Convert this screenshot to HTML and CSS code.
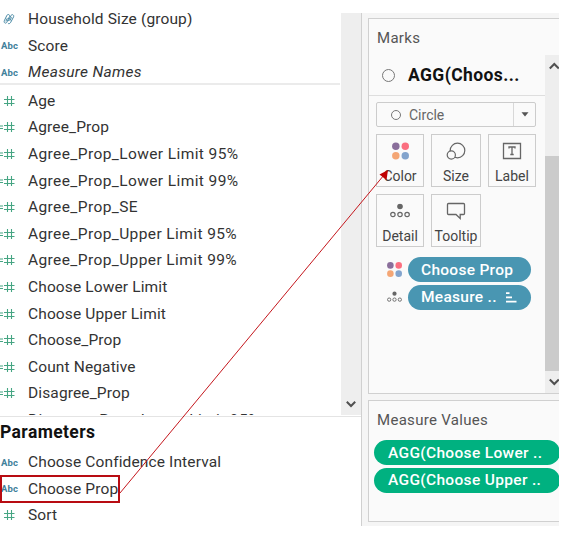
FILE: index.html
```
<!DOCTYPE html>
<html lang="en">
<head>
<meta charset="utf-8">
<title>Worksheet</title>
<link rel="stylesheet" href="styles.css">
</head>
<body>
<svg class="defs" width="0" height="0">
  <symbol id="hash" viewBox="0 0 12 12"><path d="M4.500 1v10M8.500 1v10M1 4.500h10.500M1 8.500h10.500" stroke="#46a583" stroke-width="1.1" fill="none"/></symbol>
  <symbol id="calc" viewBox="0 0 15 12"><path d="M7.500 1v10M11.500 1v10M4 4.500h10.500M4 8.500h10.500M0 5h3M0 7.500h3" stroke="#46a583" stroke-width="1.1" fill="none"/></symbol>
  <symbol id="clip" viewBox="0 0 12 12"><path d="M1.3 7.8 3.8 2.5C4.7.7 7.3 1.6 6.5 3.5L3.8 9.3C3 11 .5 10 1.3 7.8M4.3 5.2 2.8 8.3M5.2 10.6c1.2.3 2-.3 2.5-1.3L10.5 4c.9-1.9-1.2-3.2-2.4-1.6L5.4 8.1M8.5 4.3 6.8 7.8" stroke="#4b8ba6" stroke-width="1" fill="none"/></symbol>
  <symbol id="dots" viewBox="0 0 16 16"><circle cx="3.6" cy="3.6" r="3.5" fill="#8a6f9b"/><circle cx="12.5" cy="3.6" r="3.5" fill="#fb6f80"/><circle cx="3.6" cy="12.4" r="3.5" fill="#f4a675"/><circle cx="12.5" cy="12.4" r="3.5" fill="#83a4cd"/></symbol>
  <symbol id="detail" viewBox="0 0 20 15"><circle cx="10" cy="3" r="2.8" fill="#666"/><g fill="none" stroke="#666" stroke-width="1.2"><circle cx="2.9" cy="11" r="2.2"/><circle cx="10" cy="11" r="2.2"/><circle cx="17.1" cy="11" r="2.2"/></g></symbol>
</svg>
<main class="workspace">
  <section class="data-pane">
    <div class="fields">
      <div class="field-list">
        <ul class="rows dimensions">
          <li><svg class="icon-clip"><use href="#clip"/></svg><span>Household Size (group)</span></li>
          <li><b class="abc">Abc</b><span>Score</span></li>
          <li><b class="abc">Abc</b><span class="generated">Measure Names</span></li>
        </ul>
        <ul class="rows measures">
          <li><svg class="icon-hash"><use href="#hash"/></svg><span>Age</span></li>
          <li><svg class="icon-calc"><use href="#calc"/></svg><span>Agree_Prop</span></li>
          <li><svg class="icon-calc"><use href="#calc"/></svg><span class="wide">Agree_Prop_Lower Limit 95%</span></li>
          <li><svg class="icon-calc"><use href="#calc"/></svg><span class="wide">Agree_Prop_Lower Limit 99%</span></li>
          <li><svg class="icon-calc"><use href="#calc"/></svg><span class="wide">Agree_Prop_SE</span></li>
          <li><svg class="icon-calc"><use href="#calc"/></svg><span class="wide">Agree_Prop_Upper Limit 95%</span></li>
          <li><svg class="icon-calc"><use href="#calc"/></svg><span class="wide">Agree_Prop_Upper Limit 99%</span></li>
          <li><svg class="icon-calc"><use href="#calc"/></svg><span>Choose Lower Limit</span></li>
          <li><svg class="icon-calc"><use href="#calc"/></svg><span>Choose Upper Limit</span></li>
          <li><svg class="icon-calc"><use href="#calc"/></svg><span>Choose_Prop</span></li>
          <li><svg class="icon-calc"><use href="#calc"/></svg><span>Count Negative</span></li>
          <li><svg class="icon-calc"><use href="#calc"/></svg><span>Disagree_Prop</span></li>
          <li><svg class="icon-calc"><use href="#calc"/></svg><span class="wide">Disagree_Prop_Lower Limit 95%</span></li>
        </ul>
      </div>
      <div class="scrollbar"><svg width="10" height="7" viewBox="0 0 10 7"><path d="M.8 .8 5 5l4.200-4.200" fill="none" stroke="#505050" stroke-width="2"/></svg></div>
    </div>
    <div class="parameters">
      <h2>Parameters</h2>
      <ul class="rows">
        <li><b class="abc">Abc</b><span>Choose Confidence Interval</span></li>
        <li><b class="abc">Abc</b><span>Choose Prop</span></li>
        <li><svg class="icon-hash"><use href="#hash"/></svg><span>Sort</span></li>
      </ul>
    </div>
  </section>
  <aside class="cards">
    <section class="card marks">
      <h3>Marks</h3>
      <div class="marks-main">
        <div class="marks-content">
          <div class="marks-head"><i class="ring"></i><strong>AGG(Choos...</strong></div>
          <div class="mark-type"><i class="ring small"></i><span>Circle</span><div class="drop"><svg width="8" height="5" viewBox="0 0 8 5"><path d="M.5.3h7L4 4.500z" fill="#555"/></svg></div></div>
          <div class="buttons">
            <div class="button"><svg width="17" height="18"><use href="#dots"/></svg><span>Color</span></div>
            <div class="button"><svg width="20" height="18" viewBox="0 0 20 18"><g fill="#fafafa" stroke="#666" stroke-width="1.200"><circle cx="11.500" cy="8.500" r="7.300"/><circle cx="5.300" cy="13" r="4.100"/></g></svg><span>Size</span></div>
            <div class="button"><svg width="20" height="18" viewBox="0 0 20 18"><path d="M1.500 1.500h17v15h-17zM7 6.500V5h6v1.500M10 5v7.500M8.300 12.500h3.400" fill="none" stroke="#666" stroke-width="1.300"/></svg><span>Label</span></div>
            <div class="button"><svg width="20" height="18" viewBox="0 -1.500 20 18"><use href="#detail" width="20" height="15"/></svg><span>Detail</span></div>
            <div class="button"><svg width="20" height="18" viewBox="0 0 20 18"><path d="M2.500 1.500h15q1 0 1 1v9q0 1-1 1h-3.300v4L10 12.500H2.500q-1 0-1-1v-9q0-1 1-1z" fill="none" stroke="#666" stroke-width="1.300"/></svg><span>Tooltip</span></div>
          </div>
          <div class="pill-row"><svg width="15" height="15"><use href="#dots"/></svg><div class="pill blue">Choose Prop</div></div>
          <div class="pill-row"><svg width="15" height="12"><use href="#detail"/></svg><div class="pill blue"><span>Measure ..</span><svg class="sort" width="11" height="11" viewBox="0 0 11 11"><path d="M0 1.200h3.500M0 5.400h6M0 9.600h10.500" stroke="#fff" stroke-width="1.700"/></svg></div></div>
        </div>
        <div class="marks-scroll">
          <svg width="11" height="8" viewBox="0 0 11 8"><path d="M.8 6.500 5.300 2l4.500 4.500" fill="none" stroke="#505050" stroke-width="2"/></svg>
          <div class="thumb"></div>
          <svg width="11" height="8" viewBox="0 0 11 8"><path d="M.8 1.500 5.300 6l4.500-4.500" fill="none" stroke="#505050" stroke-width="2"/></svg>
        </div>
      </div>
    </section>
    <section class="card values">
      <h3>Measure Values</h3>
      <div class="pill green">AGG(Choose Lower ..</div>
      <div class="pill green">AGG(Choose Upper ..</div>
    </section>
  </aside>
</main>
<svg class="annotation" width="562" height="539">
  <rect x="1" y="476" width="118" height="26" fill="none" stroke="#b80c12" stroke-width="2"/>
  <path d="M120 493 384 175" stroke="#c4161c" stroke-width="1"/>
  <path d="M388 170 386.500 180 379.500 174.500z" fill="#c00000"/>
</svg>
</body>
</html>
```
FILE: styles.css
```
* { box-sizing: border-box; }
body { margin: 0; width: 562px; height: 539px; overflow: hidden; background: #fff; color: #333; font-family: Roboto, "Liberation Sans", sans-serif; font-size: 15px; }
h2, h3, ul { margin: 0; padding: 0; }
.defs { position: absolute; }
.workspace { display: flex; width: 559px; height: 513px; margin-top: 13px; overflow: hidden; }
.data-pane { flex: none; width: 362px; border-right: 1px solid #d0d0d0; }
.fields { display: flex; height: 404px; border-bottom: 1px solid #e4e4e4; }
.field-list { flex: 1; height: 402px; overflow: hidden; }
.rows { list-style: none; font-size: 15.500px; letter-spacing: .13px; line-height: 12px; }
.rows li { display: flex; align-items: center; height: 26.6px; white-space: nowrap; }
.rows li > :first-child { flex: none; }
.rows li > span { margin-left: auto; width: calc(100% - 28px); }
.rows .wide { letter-spacing: .4px; }
.dimensions { margin-top: -7px; height: 79px; border-bottom: 2px solid #ebebeb; width: 340px; }
.measures { padding-top: 2.500px; }
.rows .generated { font-style: italic; letter-spacing: .3px; }
.abc { margin-left: 1px; font: bold 9.500px Roboto, sans-serif; letter-spacing: .1px; color: #3f819b; }
.icon-clip { width: 12px; height: 12px; margin-left: 3px; }
.icon-hash { width: 12px; height: 12px; margin-left: 3px; }
.icon-calc { width: 15px; height: 12px; }
.scrollbar { display: flex; align-items: flex-end; justify-content: center; width: 20px; height: 402px; padding-bottom: 7px; background: #eee; }
.parameters h2 { height: 32px; font-size: 17.500px; line-height: 30px; font-weight: bold; letter-spacing: .4px; color: #111; }
.cards { flex: 1; padding: 5px 0 0 6px; background: #f5f5f5; }
.card { border: 1px solid #d0d0d0; border-right: 0; background: #fafafa; }
.card h3 { padding-left: 8px; font-weight: normal; font-size: 15px; letter-spacing: .3px; color: #555; }
.marks { height: 376px; }
.marks h3 { height: 36px; line-height: 38px; }
.marks-main { display: flex; }
.marks-content { flex: none; width: 176px; height: 338px; }
.marks-head { display: flex; align-items: center; gap: 13px; height: 41px; padding-left: 13px; border-bottom: 1px solid #dedede; color: #111; font-size: 17.500px; letter-spacing: .4px; }
.ring { width: 13px; height: 13px; border: 1px solid #777; border-radius: 50%; }
.ring.small { width: 10px; height: 10px; }
.mark-type { display: flex; align-items: center; gap: 8px; width: 160px; height: 25px; margin: 6px 0 7px 7px; padding-left: 14px; border: 1px solid #ccc; border-radius: 2px; font-size: 14px; color: #666; }
.drop { display: grid; place-items: center; width: 22px; height: 23px; margin-left: auto; border-left: 1px solid #d8d8d8; }
.buttons { display: grid; grid-template-columns: 48px 50px 48px; grid-auto-rows: 53px; gap: 7px; margin-left: 7px; }
.button { display: flex; flex-direction: column; align-items: center; padding-top: 7px; border: 1px solid #ccc; font-size: 14px; color: #444; }
.button span { margin-top: 7px; line-height: 18px; }
.pill-row { display: grid; grid-template-columns: 15px 123px; align-items: center; gap: 6px; margin: 10px 0 0 18px; }
.pill-row + .pill-row { margin-top: 2.500px; }
.pill { display: flex; align-items: center; height: 25px; border-radius: 13px; color: #fff; font-size: 15.500px; font-weight: 500; letter-spacing: .28px; white-space: nowrap; }
.blue { padding: 0 14px 0 13px; background: #4996b2; }
.sort { margin-left: auto; }
.marks-scroll { display: flex; flex-direction: column; justify-content: space-between; flex: 1; height: 338px; padding: 7px 0; background: #eee; }
.marks-scroll svg { margin-left: 4px; flex: none; }
.thumb { height: 215px; margin-top: 78px; background: #cbcbcb; }
.values { height: 122px; margin-top: 6px; }
.values h3 { height: 39px; line-height: 38px; }
.green { width: 186px; margin: 0 0 2.500px 5px; padding-left: 14px; background: #00b180; letter-spacing: .33px; }
.annotation { position: absolute; left: 0; top: 0; }
```
